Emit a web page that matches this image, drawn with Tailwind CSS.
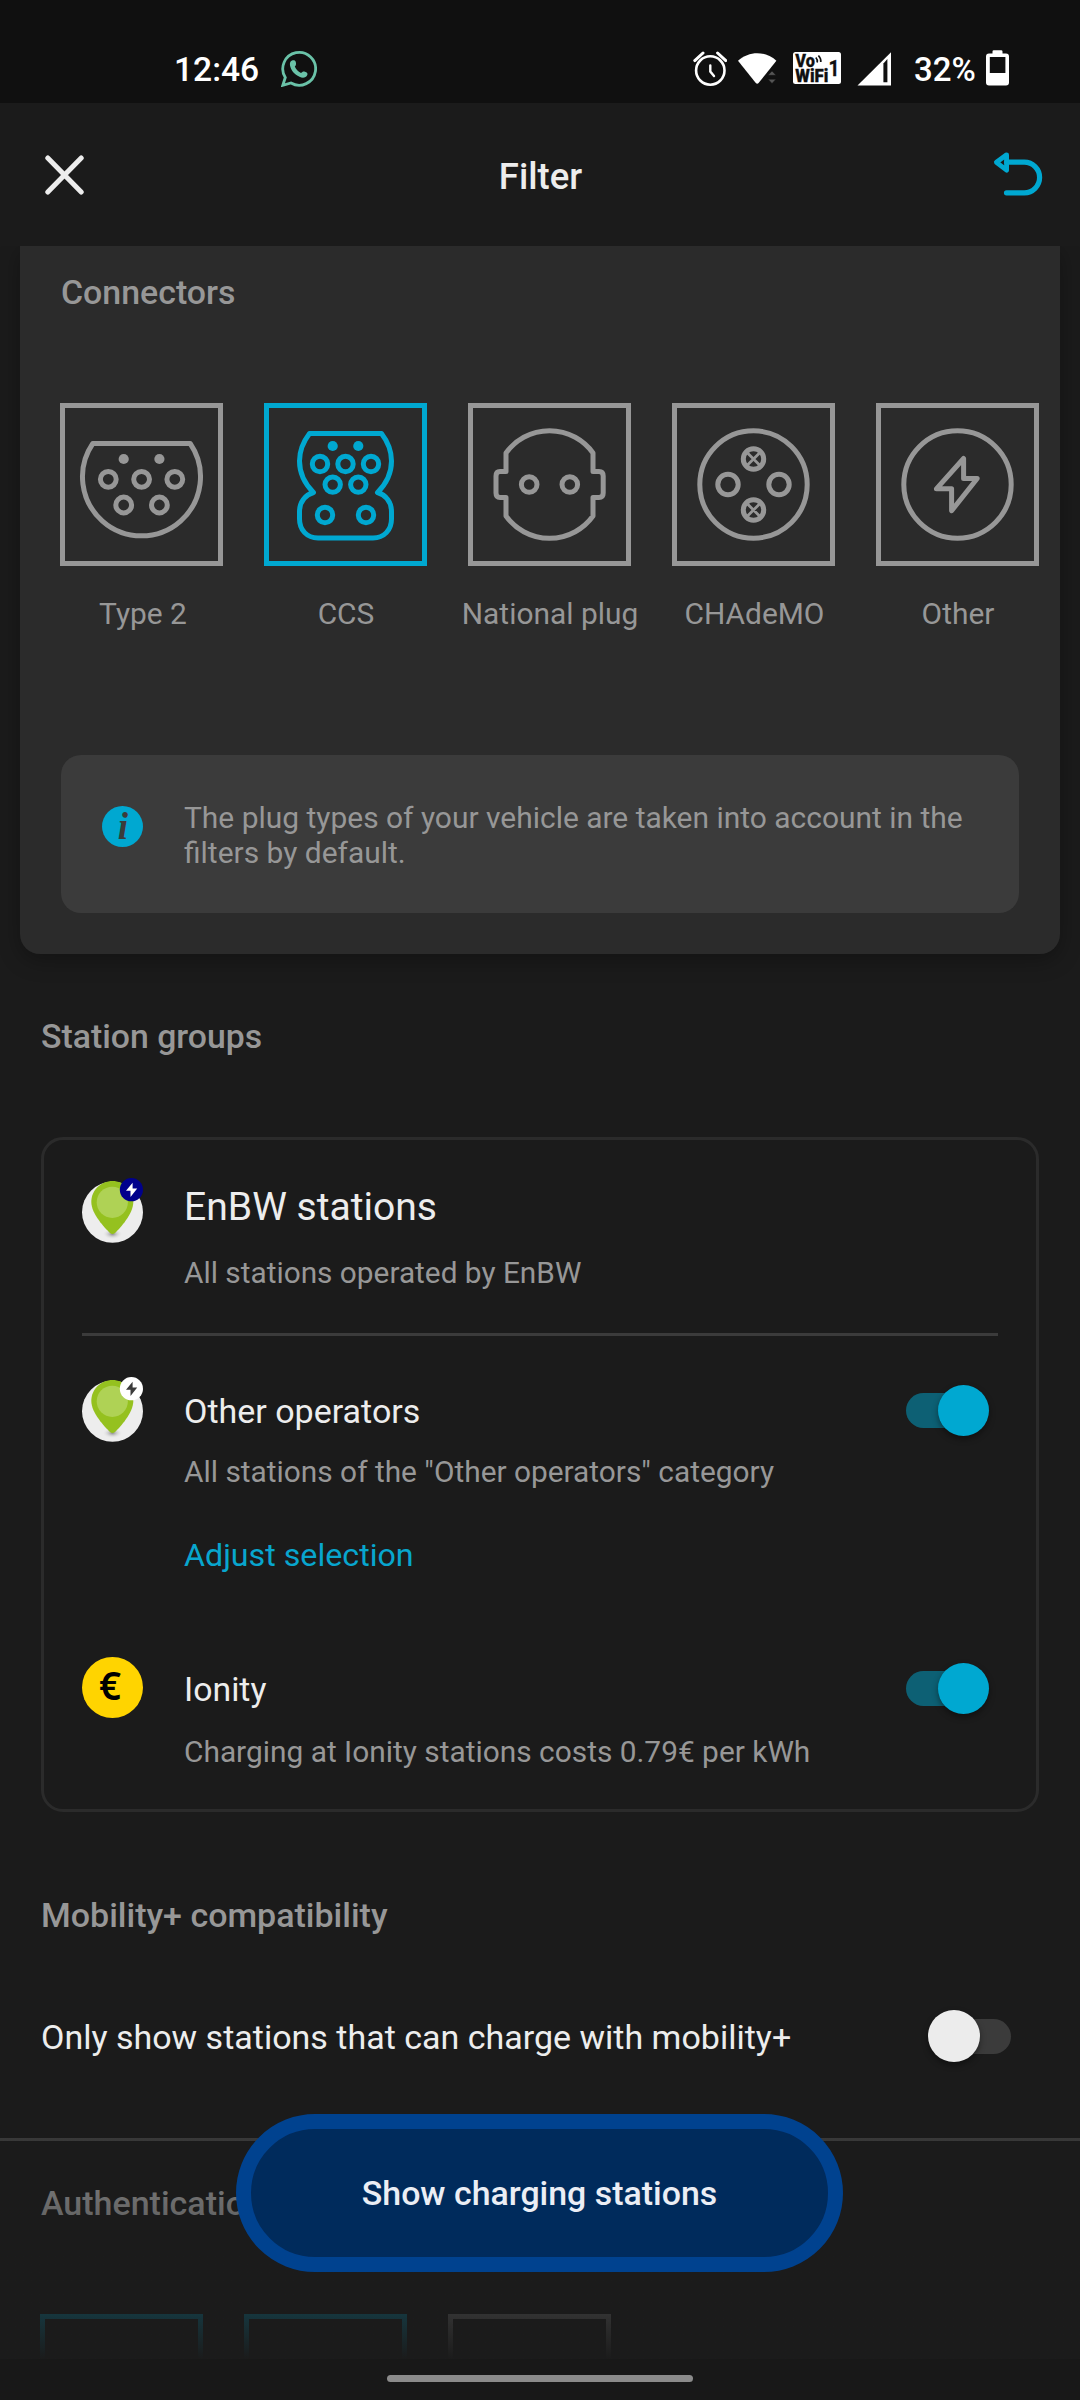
<!DOCTYPE html>
<html lang="en">
<head>
<meta charset="utf-8">
<title>Filter</title>
<script src="https://cdn.jsdelivr.net/npm/@tailwindcss/browser@4"></script>
</head>
<body class="w-[1080px] h-[2400px] overflow-hidden bg-[#1b1b1b] font-['Roboto',sans-serif] text-[#ededed]">

<!-- Status bar -->
<div class="h-[103px] bg-[#101010] flex items-start pt-[50px] pl-[174px] pr-[71px] text-white font-medium text-[33.6px] leading-[38px]">
  <span class="w-[87px] leading-[40px]">12:46</span>
  <svg class="ml-5 w-9 h-[37px]" viewBox="0 0 36 37" fill="none">
    <path d="M4.3 27.5L1.8 35.3L10 33A16.4 16.4 0 1 0 4.3 27.5Z" stroke="#6ac2a8" stroke-width="2.8"/>
    <path d="M11 10.5C13 9.8 14.3 10.3 14.8 12C15.3 14 15 15.5 13.8 16.5C15 19.5 17 21.5 20 23C21.5 21.5 22.5 21 24 21.8C26 22.5 27 23.5 26.3 25C25 28 21.5 28.3 18.5 26.8C13.5 24.5 10 20.5 9 15.5C8.7 13 9 11.5 11 10.5Z" fill="#6ac2a8"/>
  </svg>
  <div class="ml-auto flex items-start">
    <svg class="w-[34px] h-[37px]" viewBox="0 0 34 37" fill="none" stroke="#fff" stroke-width="2.6" stroke-linecap="round">
      <circle cx="17.3" cy="20.5" r="14.2"/><path d="M1.8 10.6L10 3M24.6 3L32.8 10.6" stroke-width="3"/><path d="M17.3 15.5V21.5L21 26" stroke-width="2.4"/>
    </svg>
    <svg class="ml-[11px] mt-[3px] w-[39px] h-8" viewBox="0 0 39 32">
      <path d="M0 7.8C11 -2.4 27.4 -2.4 38.4 7.8L20.6 30Q19.2 31.6 17.8 30Z" fill="#fff"/>
      <path d="M30 22.3L34 18L38 22.3ZM30 26.2L34 30.5L38 26.2Z" fill="#555" stroke="#101010" stroke-width=".5"/>
    </svg>
    <svg class="ml-4 mt-0.5 w-[48px] h-8" viewBox="0 0 48 32">
      <rect width="48" height="32" rx="2.5" fill="#fff"/>
      <g fill="#101010" stroke="#101010" stroke-width=".3" font-family="Roboto" font-weight="900">
        <text x="2.3" y="14.6" font-size="17.5" textLength="19.5" lengthAdjust="spacingAndGlyphs">Vo</text>
        <text x="2.3" y="30.2" font-size="17.5" textLength="33" lengthAdjust="spacingAndGlyphs">WiFi</text>
        <text x="35.5" y="24" font-size="21.5" font-weight="700" textLength="11" lengthAdjust="spacingAndGlyphs">1</text>
      </g>
      <path d="M22.8 5.5Q24.8 7.5 24.2 10.5M25.4 3.5Q28.2 6.5 27.8 10" fill="none" stroke="#101010" stroke-width="1.7"/>
    </svg>
    <svg class="ml-4 mt-0.5 w-[34px] h-[34px]" viewBox="0 0 34 34">
      <path d="M.5 33.5L34 .2V33.5Z" fill="#fff"/><path d="M26.4 11.5L30.4 7V30.3H26.4Z" fill="#101010"/>
    </svg>
    <span class="ml-[23px] mt-px w-[62px] whitespace-nowrap text-[33px]">32%</span>
    <svg class="ml-2.5 w-[23px] h-9" viewBox="0 0 23 36">
      <path d="M6.5 3.5V1.5Q6.5 .3 7.8 .3H15.2Q16.5 .3 16.5 1.5V3.5H20Q23 3.5 23 6.5V32.5Q23 35.5 20 35.5H3Q0 35.5 0 32.5V6.5Q0 3.5 3 3.5Z" fill="#fff"/><rect x="3.8" y="7" width="15.6" height="16" fill="#101010"/>
    </svg>
  </div>
</div>

<!-- App bar -->
<header class="h-[143px] flex items-center pl-[45px] pr-[37px]">
  <svg class="w-[39px] h-10" viewBox="0 0 39 40"><path d="M2.8 3L36.2 37M36.2 3L2.8 37" stroke="#ededed" stroke-width="5" stroke-linecap="round"/></svg>
  <h1 class="flex-1 text-center pl-1 pt-[5px] font-medium text-[36.5px] leading-[40px]">Filter</h1>
  <svg class="w-[50px] h-[50px]" viewBox="0 0 50 50" fill="none" stroke="#00a8d1" stroke-width="5.2" stroke-linecap="round" stroke-linejoin="round">
    <path d="M13.6 4.8L3.4 12.3L13.6 20.2Z" stroke-width="4.8"/><path d="M13.6 12.2H31.3A15.3 15.3 0 0 1 31.3 42.8H13.5"/>
  </svg>
</header>

<main class="relative h-[2113px] overflow-hidden">
  <!-- Connectors -->
  <section class="mx-5 h-[708px] rounded-b-[20px] bg-[#2b2b2b] pt-[26px] px-[41px] text-[#979797] shadow-[0_6px_22px_rgba(0,0,0,0.3)]">
    <h2 class="font-medium text-[33.9px] leading-[42px]">Connectors</h2>
    <div class="-ml-px mt-[89px] flex gap-[41px] text-[29.9px] leading-9">
      <div class="w-[163px] shrink-0 flex flex-col items-center gap-[30px] whitespace-nowrap">
        <svg class="w-[163px] h-[163px]" viewBox="0 0 163 163" fill="none" stroke="#979797" stroke-width="5" stroke-linejoin="round">
          <rect x="2.5" y="2.5" width="158" height="158" stroke-linejoin="miter"/>
          <path d="M32.8 40.5H130.2A59 59 0 1 1 32.8 40.5Z"/>
          <circle cx="48.3" cy="76.3" r="7.9"/><circle cx="81.6" cy="76.3" r="7.9"/><circle cx="114.8" cy="76.3" r="7.9"/><circle cx="63.7" cy="102" r="7.9"/><circle cx="99.4" cy="102" r="7.9"/>
          <circle cx="63.7" cy="56" r="5.1" fill="#979797" stroke="none"/><circle cx="99.4" cy="56" r="5.1" fill="#979797" stroke="none"/>
        </svg>
        <span class="pl-[3px]">Type 2</span>
      </div>
      <div class="w-[163px] shrink-0 flex flex-col items-center gap-[30px] whitespace-nowrap">
        <svg class="w-[163px] h-[163px]" viewBox="0 0 163 163" fill="none" stroke="#00a8d1" stroke-width="5" stroke-linejoin="round">
          <rect x="2.5" y="2.5" width="158" height="158" stroke-linejoin="miter"/>
          <path d="M45.5 30.5H117.5C124 39 127.5 48 127.5 58C127.5 70 122 81 113.5 89.5C122 92 127.5 99 127.5 109V116C127.5 127 120 135 109 135H54C43 135 35.5 127 35.5 116V109C35.5 99 41 92 49.5 89.5C41 81 35.5 70 35.5 58C35.5 48 39 39 45.5 30.5Z"/>
          <circle cx="56" cy="61" r="7.7"/><circle cx="81.5" cy="61" r="7.7"/><circle cx="107" cy="61" r="7.7"/><circle cx="68.7" cy="81.6" r="7.7"/><circle cx="94.3" cy="81.6" r="7.7"/><circle cx="61" cy="112" r="7.7"/><circle cx="102" cy="112" r="7.7"/>
          <circle cx="68.7" cy="43" r="5.1" fill="#00a8d1" stroke="none"/><circle cx="94.3" cy="43" r="5.1" fill="#00a8d1" stroke="none"/>
        </svg>
        <span class="pl-px">CCS</span>
      </div>
      <div class="w-[163px] shrink-0 flex flex-col items-center gap-[30px] whitespace-nowrap">
        <svg class="w-[163px] h-[163px]" viewBox="0 0 163 163" fill="none" stroke="#979797" stroke-width="5" stroke-linejoin="round">
          <rect x="2.5" y="2.5" width="158" height="158" stroke-linejoin="miter"/>
          <path d="M38 50A53.6 53.6 0 0 1 125 50V68.5H131Q135.2 68.5 135.2 73V90Q135.2 94.4 131 94.4H125V113A53.6 53.6 0 0 1 38 113V94.4H32Q28 94.4 28 90V73Q28 68.5 32 68.5H38Z"/>
          <circle cx="61.2" cy="81.5" r="7.8"/><circle cx="101.8" cy="81.5" r="7.8"/>
        </svg>
        <span class="pl-px">National plug</span>
      </div>
      <div class="w-[163px] shrink-0 flex flex-col items-center gap-[30px] whitespace-nowrap">
        <svg class="w-[163px] h-[163px]" viewBox="0 0 163 163" fill="none" stroke="#979797" stroke-width="5" stroke-linejoin="round">
          <rect x="2.5" y="2.5" width="158" height="158" stroke-linejoin="miter"/>
          <circle cx="81.5" cy="81.5" r="53.7"/>
          <circle cx="56" cy="81.5" r="10.2"/><circle cx="107" cy="81.5" r="10.2"/><circle cx="81.5" cy="56" r="10.2"/><circle cx="81.5" cy="107" r="10.2"/>
          <path d="M75.5 50L87.5 62M87.5 50L75.5 62M75.5 101L87.5 113M87.5 101L75.5 113" stroke-width="2.8"/>
        </svg>
        <span class="pl-0.5">CHAdeMO</span>
      </div>
      <div class="w-[163px] shrink-0 flex flex-col items-center gap-[30px] whitespace-nowrap">
        <svg class="w-[163px] h-[163px]" viewBox="0 0 163 163" fill="none" stroke="#979797" stroke-width="5" stroke-linejoin="round">
          <rect x="2.5" y="2.5" width="158" height="158" stroke-linejoin="miter"/>
          <circle cx="81.5" cy="81.5" r="53.7"/>
          <path d="M87.6 55.5V75.5H101.2L75.6 107.7V85.8H60.4Z"/>
        </svg>
        <span class="pl-px">Other</span>
      </div>
    </div>
    <div class="mt-[123px] h-[158px] rounded-[20px] bg-[#3b3b3b] pl-[41px] pt-[45px] flex items-start gap-[41px]">
      <svg class="mt-1.5 w-[41px] h-[41px] shrink-0" viewBox="0 0 41 41">
        <circle cx="20.5" cy="20.5" r="20.5" fill="#00a8d1"/>
        <text x="20.8" y="32.8" text-anchor="middle" font-family="Liberation Serif" font-style="italic" font-weight="700" font-size="37" fill="#3b3b3b">i</text>
      </svg>
      <p class="text-[29.95px] leading-[35px] whitespace-nowrap">The plug types of your vehicle are taken into account in the<br>filters by default.</p>
    </div>
  </section>

  <!-- Station groups -->
  <h2 class="mt-[62px] ml-[41px] font-medium text-[33.8px] leading-[42px] text-[#979797]">Station groups</h2>
  <section class="mt-[79px] mx-[41px] h-[675px] rounded-[22px] border-[3px] border-[#2b2b2b] pl-[38px]">
    <div class="pt-[38px] flex items-start gap-[41px]">
      <svg class="w-[61px] h-[65px]" viewBox="0 0 61 65">
        <defs><radialGradient id="pinShadow"><stop offset="0" stop-color="#8a8a8a"/><stop offset="1" stop-color="#ededed" stop-opacity="0"/></radialGradient></defs>
        <circle cx="30.5" cy="34.2" r="30.5" fill="#ededed"/>
        <ellipse cx="30.5" cy="56" rx="10" ry="5.5" fill="url(#pinShadow)"/>
        <path d="M30.5 3C42 3 51.3 12 51.3 24C51.3 36 38 50 33.3 54.8Q30.5 57.4 27.7 54.8C23 50 9.3 36 9.3 24C9.3 12 19 3 30.5 3Z" fill="#95c11f"/>
        <circle cx="30.3" cy="24.3" r="15.6" fill="#afd255"/>
        <circle cx="49.4" cy="11.7" r="11.6" fill="#00008c"/>
        <path d="M50.6 4.8L44 12.8H48.5V19L55.2 10.6H50.6Z" fill="#fff"/>
      </svg>
      <div class="pt-[5px]">
        <h3 class="text-[39.1px] leading-[48px]">EnBW stations</h3>
        <p class="mt-6 text-[29.8px] leading-9 text-[#979797]">All stations operated by EnBW</p>
      </div>
    </div>
    <div class="mt-[42px] mr-[38px] h-[3px] bg-[#3b3b3b]"></div>
    <div class="pt-[41px] pr-[47px] flex items-start gap-[41px]">
      <svg class="w-[61px] h-[65px]" viewBox="0 0 61 65">
        <circle cx="30.5" cy="34.2" r="30.5" fill="#ededed"/>
        <ellipse cx="30.5" cy="56" rx="10" ry="5.5" fill="url(#pinShadow)"/>
        <path d="M30.5 3C42 3 51.3 12 51.3 24C51.3 36 38 50 33.3 54.8Q30.5 57.4 27.7 54.8C23 50 9.3 36 9.3 24C9.3 12 19 3 30.5 3Z" fill="#95c11f"/>
        <circle cx="30.3" cy="24.3" r="15.6" fill="#afd255"/>
        <circle cx="49.4" cy="11.7" r="11.6" fill="#fff"/>
        <path d="M50.6 4.8L44 12.8H48.5V19L55.2 10.6H50.6Z" fill="#3b3b3b"/>
      </svg>
      <div class="pt-[14px]">
        <h3 class="text-[34px] leading-[40px]">Other operators</h3>
        <p class="mt-[23px] text-[29.85px] leading-9 text-[#979797]">All stations of the "Other operators" category</p>
        <p class="mt-[45px] text-[32.2px] leading-[40px] text-[#08a6ce]">Adjust selection</p>
      </div>
      <div class="relative ml-auto mt-2 w-[83px] h-[51px]">
        <div class="absolute left-0 top-2 w-[82px] h-[35px] rounded-full bg-[#0d6074]"></div>
        <div class="absolute right-0 top-0 size-[51px] rounded-full bg-[#00a8d1] shadow-[0_3px_6px_rgba(0,0,0,0.4)]"></div>
      </div>
    </div>
    <div class="mt-[82px] pr-[47px] flex items-start gap-[41px]">
      <svg class="w-[61px] h-[61px]" viewBox="0 0 61 61">
        <circle cx="30.5" cy="30.5" r="30.5" fill="#ffd400"/>
        <text x="28" y="43.4" text-anchor="middle" font-family="Noto Sans" font-weight="600" font-size="39" fill="#000" textLength="22" lengthAdjust="spacingAndGlyphs">€</text>
      </svg>
      <div class="pt-3">
        <h3 class="text-[33.8px] leading-[42px]">Ionity</h3>
        <p class="mt-[23px] text-[29.87px] leading-9 text-[#979797]">Charging at Ionity stations costs 0.79€ per kWh</p>
      </div>
      <div class="relative ml-auto mt-1.5 w-[83px] h-[51px]">
        <div class="absolute left-0 top-2 w-[82px] h-[35px] rounded-full bg-[#0d6074]"></div>
        <div class="absolute right-0 top-0 size-[51px] rounded-full bg-[#00a8d1] shadow-[0_3px_6px_rgba(0,0,0,0.4)]"></div>
      </div>
    </div>
  </section>

  <!-- Mobility+ compatibility -->
  <h2 class="mt-[83px] ml-[41px] font-medium text-[34px] leading-[40px] text-[#979797]">Mobility+ compatibility</h2>
  <div class="mt-[75px] h-32 pl-[41px] pr-[69px] flex items-start">
    <span class="pt-[7px] text-[34px] leading-[40px]">Only show stations that can charge with mobility+</span>
    <div class="relative ml-auto w-[83px] h-[51px]">
      <div class="absolute right-0 top-[9px] w-[82px] h-[35px] rounded-full bg-[#3b3b3b]"></div>
      <div class="absolute left-0 top-0 size-[52px] rounded-full bg-[#ececec] shadow-[0_3px_6px_rgba(0,0,0,0.4)]"></div>
    </div>
  </div>
  <div class="h-[3px] bg-[#3b3b3b]"></div>

  <!-- Authentication -->
  <h2 class="mt-[42px] ml-[41px] font-medium text-[34px] leading-[40px] text-[#979797]">Authentication</h2>
  <div class="mt-[91px] ml-10 flex gap-[41px]">
    <div class="size-[163px] shrink-0 border-[5px] border-[#00a8d1]"></div>
    <div class="size-[163px] shrink-0 border-[5px] border-[#00a8d1]"></div>
    <div class="size-[163px] shrink-0 border-[5px] border-[#979797]"></div>
  </div>

  <div class="absolute inset-x-0 bottom-0 h-60 bg-linear-to-b from-[#1b1b1b]/0 to-[#1b1b1b]"></div>
  <button class="absolute left-[236px] bottom-[87px] w-[607px] h-[158px] rounded-full border-[15px] border-[#00428f] bg-[#002b5c] pt-0.5 font-medium text-[33.9px] leading-[40px] text-[#ebeef5]">Show charging stations</button>
</main>

<!-- Gesture bar -->
<div class="h-[41px] bg-[#181818] flex justify-center pt-4">
  <div class="w-[306px] h-[7px] rounded-full bg-[#8b8b8b]"></div>
</div>
</body>
</html>
